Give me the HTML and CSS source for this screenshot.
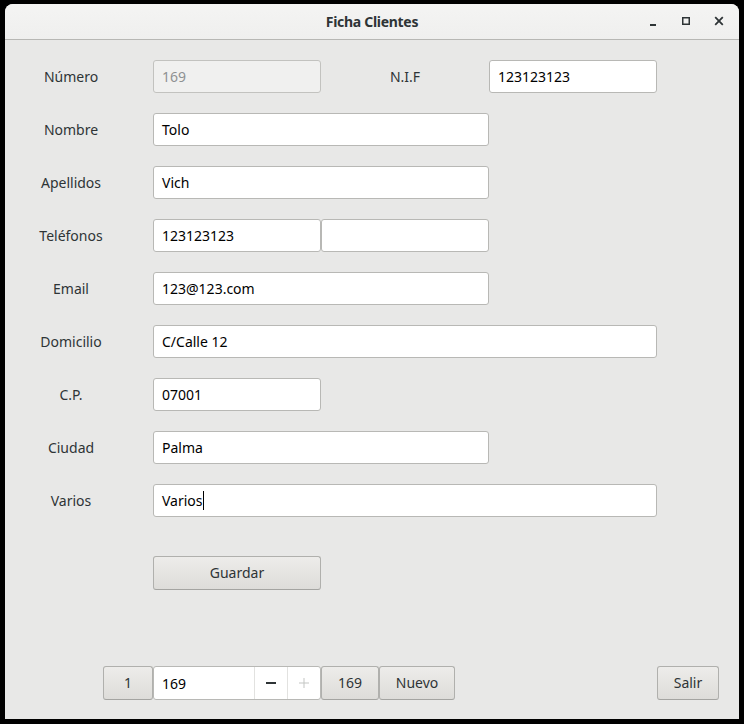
FILE: index.html
```html
<!DOCTYPE html>
<html>
<head>
<meta charset="utf-8">
<link rel="stylesheet" href="styles.css">
</head>
<body>
<div class="window">
  <div class="titlebar">
    <div class="title">Ficha Clientes</div>
    <div class="controls">
      <svg class="ctl" width="12" height="12" viewBox="0 0 12 12"><rect x="3" y="8" width="6" height="2" fill="#2e3436"/></svg>
      <svg class="ctl" width="12" height="12" viewBox="0 0 12 12"><rect x="2.75" y="1.75" width="6.5" height="6.5" fill="none" stroke="#2e3436" stroke-width="1.5"/></svg>
      <svg class="ctl" width="12" height="12" viewBox="0 0 12 12"><path d="M2.2 1.2 L9.8 8.8 M9.8 1.2 L2.2 8.8" stroke="#2e3436" stroke-width="1.8"/></svg>
    </div>
  </div>
  <div class="content">
    <div class="form">
      <div class="lbl">Número</div>
      <div class="entry c1 disabled">169</div>
      <div class="lbl c2">N.I.F</div>
      <div class="entry c3">123123123</div>

      <div class="lbl">Nombre</div>
      <div class="entry c1 s2">Tolo</div>

      <div class="lbl">Apellidos</div>
      <div class="entry c1 s2">Vich</div>

      <div class="lbl">Teléfonos</div>
      <div class="entry c1">123123123</div>
      <div class="entry c2"></div>

      <div class="lbl">Email</div>
      <div class="entry c1 s2">123@123.com</div>

      <div class="lbl">Domicilio</div>
      <div class="entry c1 s3">C/Calle 12</div>

      <div class="lbl">C.P.</div>
      <div class="entry c1">07001</div>

      <div class="lbl">Ciudad</div>
      <div class="entry c1 s2">Palma</div>

      <div class="lbl">Varios</div>
      <div class="entry c1 s3">Varios<span class="caret"></span></div>
    </div>
    <div class="save-row">
      <div class="btn save">Guardar</div>
    </div>
    <div class="nav">
      <div class="btn b-first">1</div>
      <div class="spin">
        <div class="spin-text">169</div>
        <div class="spin-btn"><svg width="14" height="14" viewBox="0 0 14 14"><rect x="2" y="6" width="10" height="2" fill="#2e3436"/></svg></div>
        <div class="spin-btn"><svg width="14" height="14" viewBox="0 0 14 14"><rect x="2" y="6.5" width="10" height="1" fill="#c4c5c3"/><rect x="6.5" y="2" width="1" height="10" fill="#c4c5c3"/></svg></div>
      </div>
      <div class="btn b-last">169</div>
      <div class="btn b-new">Nuevo</div>
      <div class="btn b-exit">Salir</div>
    </div>
  </div>
</div>
</body>
</html>
```
FILE: styles.css
```css
html, body {
  margin: 0;
  padding: 0;
  background: #000;
}
body {
  font-family: "Noto Sans", "DejaVu Sans", sans-serif;
  font-size: 14px;
  color: #2e3436;
}
.window {
  margin: 4px 5px 5px 5px;
  width: 734px;
  height: 715px;
  background: #e8e8e7;
  border-radius: 8px 8px 0 0;
  overflow: hidden;
  display: flex;
  flex-direction: column;
}
.titlebar {
  height: 35px;
  flex: none;
  background: linear-gradient(#f4f4f3, #efefee);
  border-bottom: 1px solid #b7b7b4;
  position: relative;
  display: flex;
  align-items: center;
  justify-content: center;
}
.title {
  font-weight: bold;
  font-size: 14px;
  color: #2e3436;
  letter-spacing: -0.3px;
}
.controls {
  position: absolute;
  right: 14px;
  top: 12px;
  display: flex;
  gap: 21px;
}
.ctl { display: block; }
.content {
  flex: 1;
  display: flex;
  flex-direction: column;
  padding: 20px 20px 19px 0;
}
.form {
  display: grid;
  grid-template-columns: 132px 168px 168px 168px;
  column-gap: 0;
  row-gap: 20px;
  grid-auto-rows: 33px;
}
.lbl {
  grid-column: 1;
  display: flex;
  align-items: center;
  justify-content: center;
  color: #2e3436;
}
.entry {
  box-sizing: border-box;
  height: 33px;
  background: #fff;
  border: 1px solid #b8b8b5;
  border-radius: 3px;
  padding: 0 8px;
  display: flex;
  align-items: center;
  color: #000;
}
.form .c1 { grid-column: 2; margin-left: 16px; margin-right: -16px; }
.form .c2 { grid-column: 3; margin-left: 16px; margin-right: -16px; }
.form .c3 { grid-column: 4; margin-left: 16px; margin-right: -16px; }
.s2 { grid-column: 2 / span 2 !important; }
.s3 { grid-column: 2 / span 3 !important; }
.entry.disabled {
  background: #f0f0ef;
  color: #8e9192;
  border-color: #c2c2bf;
}
.caret {
  display: inline-block;
  width: 1px;
  height: 19px;
  background: #000;
}
.save-row {
  margin-top: 39px;
  padding-left: 148px;
}
.btn {
  box-sizing: border-box;
  height: 34px;
  border: 1px solid #b0b0ad;
  border-bottom-color: #a4a4a1;
  border-radius: 3px;
  background: linear-gradient(#edecea, #dddcd9);
  display: flex;
  align-items: center;
  justify-content: center;
  color: #2e3436;
  padding-bottom: 2px;
}
.save { width: 168px; }
.nav {
  margin-top: auto;
  display: flex;
  padding-left: 98px;
}
.b-first { width: 50px; }
.b-last { width: 58px; }
.b-new { width: 76px; }
.b-exit { width: 62px; margin-left: auto; }
.spin {
  box-sizing: border-box;
  width: 168px;
  height: 34px;
  background: #fff;
  border: 1px solid #b8b8b5;
  border-radius: 3px;
  display: flex;
}
.spin-text {
  width: 92px;
  padding-left: 8px;
  display: flex;
  align-items: center;
  color: #000;
}
.spin-btn {
  flex: 1;
  border-left: 1px solid #e2e2e0;
  display: flex;
  align-items: center;
  justify-content: center;
}
```
